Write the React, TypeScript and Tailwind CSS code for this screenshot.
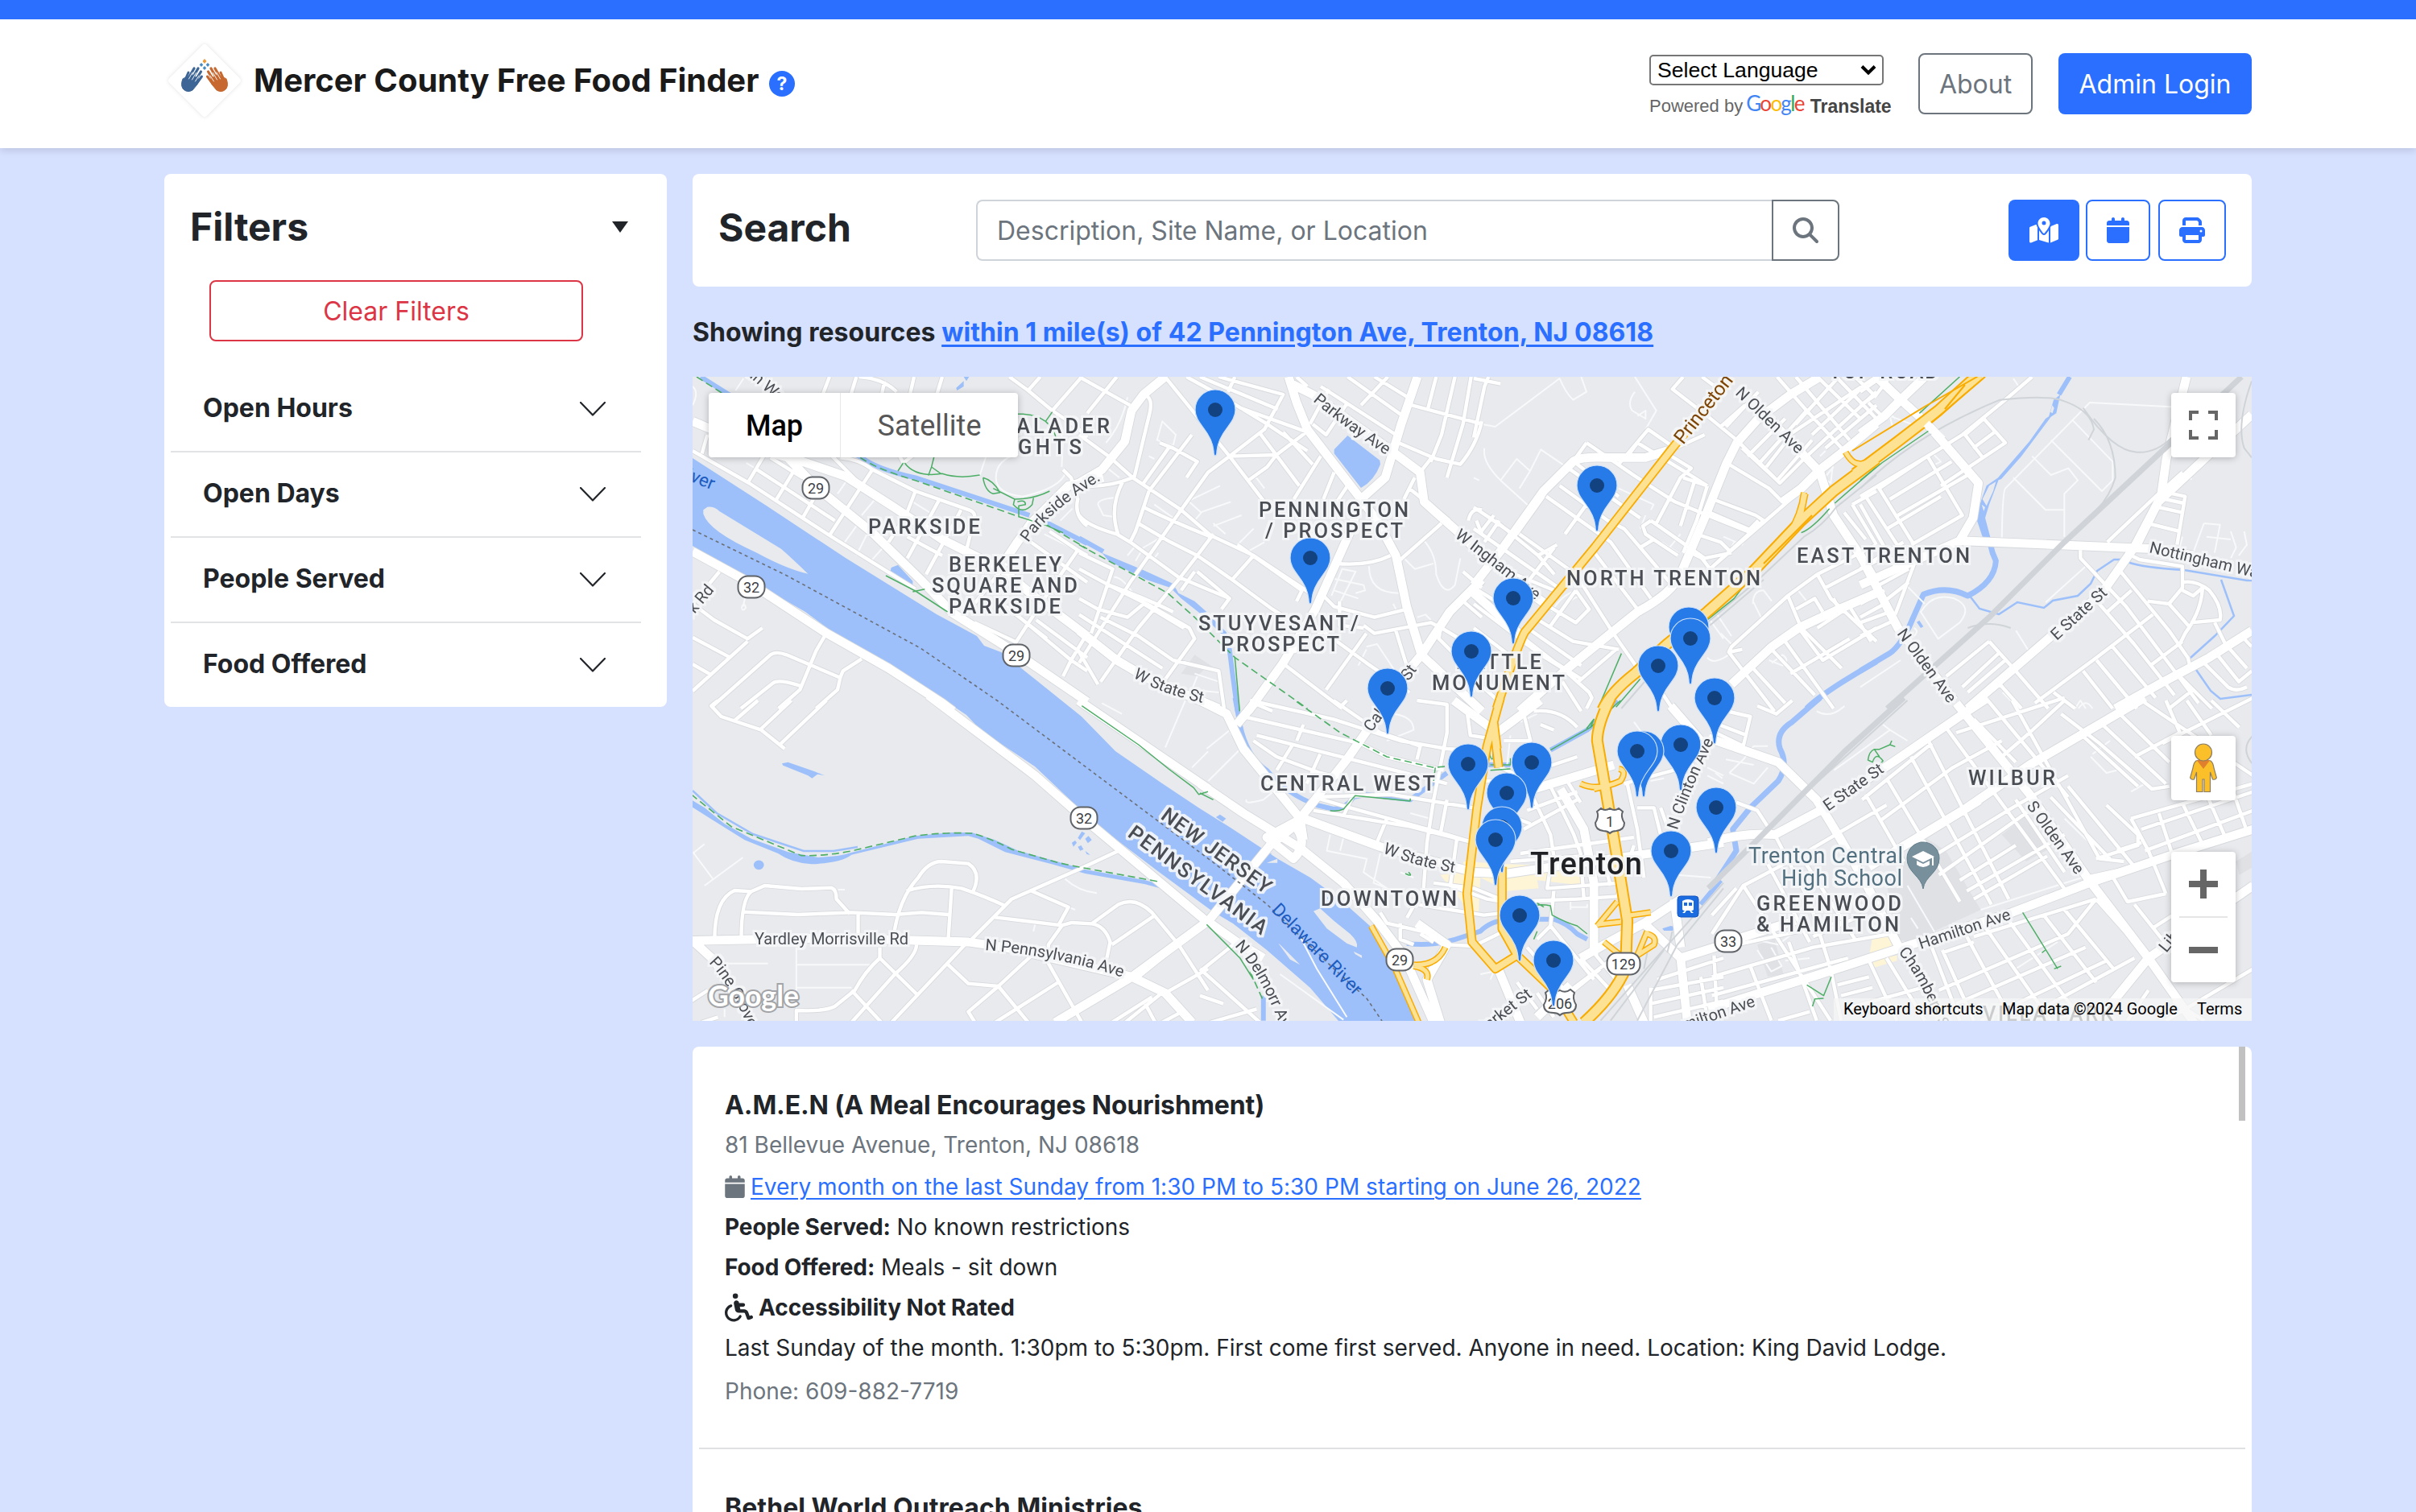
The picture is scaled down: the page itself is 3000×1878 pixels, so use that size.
import React from "react";
import {
  FaCalendar,
  FaMagnifyingGlass,
  FaMapLocationDot,
  FaPrint,
  FaWheelchair,
} from "react-icons/fa6";

/* ---------- Map geometry ---------- */

type Tile = {
  at: string;
  major?: string;
  street?: string;
  lane?: string;
  water?: string;
  stream?: string;
  creek?: string;
  trail?: string;
  dashed?: string;
  rail?: string;
  railWide?: string;
  highway?: string;
  avenue?: string;
  ramp?: string;
  land?: string;
  shade?: string;
  shop?: string;
};

const tiles: Tile[] = [
  {
    at: "translate(850 460) scale(.33333)",
    major:
      "M30 190L90 215L330 310L440 340L600 395L780 510L960 630L1180 740L1300 840L1500 990 M380 320L490 435L700 605L880 780L1000 905L1230 1050L1500 1235 M30 675L240 790L530 980L760 1110L960 1240L1000 1270 M1200 700L1240 640L1290 570L1430 430L1560 400",
    street:
      "M30 300L240 420L440 550L540 615L700 715L860 815 M65 310L85 240 M235 420L300 310 M340 485L410 370 M440 550L480 480 M540 615L660 430L700 370 M270 370L370 435L560 560 M320 325L440 400 M515 90L540 24 M620 90L640 24 M650 24Q740 30 790 80 M745 40L735 90 M840 90L855 24 M940 90L960 24 M1210 24L1280 75L1370 150L1460 210L1500 250 M1280 75L1325 24 M1370 150L1480 24 M580 325Q650 330 700 370L860 450L1060 520Q1085 530 1080 550L1050 670 M860 450L825 540L760 640 M950 480L830 700 M1030 520L965 640L900 760 M830 620L960 690 M550 320L650 420 M780 280L815 345L860 310 M1290 640L1500 790 M1360 600L1465 670L1500 690 M1465 670L1360 820L1230 1020 M1310 930L1500 1070 M1200 880L1440 1080L1500 1120 M1440 1080L1500 980 M1440 1080L1410 1140 M1080 870L1200 720 M1170 860L1350 1000 M1080 940L1230 1010 M130 750L30 870L110 930L235 1000L290 960 M30 995L170 1070 M30 1095L100 1135 M235 1010L30 1195 M525 985L490 1045L430 1190L350 1260 M100 1255L320 1060Q340 1045 380 1060L580 1145L590 1120L660 1075 M210 1260L330 1165Q350 1150 430 1175 M580 1145L570 1190L490 1260 M1410 370L1440 400L1465 480Q1450 540 1500 580",
    lane:
      "M570 460L605 410 M610 510L640 465 M660 540L710 480 M590 650L640 580 M640 690L690 590 M690 715L740 660 M710 485L800 540 M850 490L930 540 M1000 590L1050 600 M225 850L218 880 M212 885Q218 900 228 885Q222 860 212 885 M1100 390L1130 300L1250 310 M1160 400Q1160 460 1260 470Q1400 440 1420 380 M1160 400Q1160 330 1250 310 M1400 560L1445 515 M1340 610L1460 670 M190 75L220 30 M30 60Q55 80 30 130 M230 345L280 375 M1405 360L1410 260L1400 230",
    water:
      "M770 735L795 725L850 785L850 800L835 808L765 755Z M1012 65L1040 40L1040 60L1015 75Z M1040 24H1060L1050 40Z",
    stream: "M60 24L165 90L660 325Q720 370 860 400L1285 540 M1345 565L1500 645",
    trail:
      "M1240 163Q1280 160 1320 175L1345 190L1370 155 M1345 190Q1380 220 1385 260 M820 345Q860 400 960 385Q1020 405 1100 390 M815 345L795 375 M930 320L920 360L955 385 M920 360L908 392 M1112 400Q1120 450 1150 460L1175 455Q1150 410 1112 400 M1150 440L1230 480Q1300 480 1360 450 M1230 480L1225 500Q1260 540 1295 500L1300 475 M1240 490Q1270 480 1270 500L1245 505V545L1340 575L1410 605 M750 765L860 822L980 900 M850 825L895 815",
    dashed: "M45 24L140 85 M655 325Q720 370 860 410L1245 545 M1340 570L1500 665",
    land: "M70 520L85 509Q110 506 130 525L360 665Q400 700 460 758Q380 740 270 680Q90 600 70 535Z",
  },
  {
    at: "translate(1340 460) scale(.33333)",
    major:
      "M320 24L240 90L195 150L170 265L85 370L0 420 M780 24L810 120L850 220L1050 480L1110 560L1180 690L1220 880L1275 1060L1200 1150 M1260 24L1200 200L1140 400L1050 480L1010 600L880 890L760 1090L630 1270 M790 50L870 90L1150 290L1270 380L1285 490L1420 610L1500 690 M0 970L140 1080L260 1150L520 1260 M1500 780L1380 900L1275 1060L1500 1270",
    street:
      "M0 240L110 320L200 400L380 520L490 615L650 690L860 830 M30 160L140 24 M0 24L190 130 M205 400L260 170Q280 100 240 90 M320 24L430 160L560 320L690 490 M400 24L520 90L700 200L850 300 M450 24L740 145 M580 24L555 80 M520 24L760 90L690 220L560 320L480 380L380 520L190 790L0 1090 M600 140L850 230 M670 230L820 430 M860 220L735 315L700 360L630 410 M760 230L870 350 M560 320L740 315 M900 320L800 480 M950 380L910 480 M1000 430L960 490 M870 200L920 240L1000 120 M810 24L850 60 M930 70L860 200 M900 60L1180 240 M1000 24L1220 180 M1150 24L1050 130 M1100 24L1240 110 M1330 24L1300 140 M1400 24L1350 240L1310 340 M1460 24L1430 200L1370 400 M1240 130L1500 200 M1190 270L1330 330L1420 350Q1480 280 1500 190 M1270 380L1310 330 M0 540Q30 580 140 610L190 640L370 770L560 850L530 890 M165 410Q110 510 145 610 M0 430Q100 440 200 400 M240 510Q340 560 490 620 M220 570L340 640L440 690L570 780L720 890L830 960 M260 450L210 600L190 640 M590 650L830 820L810 860 M300 270L350 290L440 340L400 400 M240 420L340 280 M260 450L420 240 M650 690L570 780 M500 610L440 690L370 780L220 960L80 1160 M0 680L125 740L45 980 M0 740L110 800L270 880L410 960L430 1000L300 1180 M110 800Q250 850 350 900 M0 850L70 890L180 920L240 870L390 960 M80 920L220 990L350 1080L520 1120L540 1260 M0 910L310 1110 M0 1050L70 1170 M430 750L380 820 M440 750L560 850 M960 720Q1080 730 1160 690 M910 840L950 880L1100 920L1220 890 M1060 950L1100 980L1310 940L1350 960L1500 1050 M970 860V950L1060 960 M1180 970L1220 1100 M1070 980L920 1190 M850 930L1070 1090L1230 1200 M770 1100L980 1260 M1350 570L1180 720 M1230 440L1380 560 M1250 400L1210 480 M940 950L800 1050 M650 1240L720 1270 M1430 860L1500 920 M1500 1160L1340 1000L1345 970 M1450 560Q1460 510 1500 520 M1430 750L1500 810 M1480 560L1500 610",
    lane:
      "M310 190L360 240L350 280L290 260Z M260 320L280 330 M400 490L525 430 M410 490L455 530L430 560 M450 530L565 490 M500 580L605 540 M590 650L650 590 M620 680L690 640 M500 570L545 610 M70 500Q70 480 130 475 M70 500L90 540L125 545 M280 500L380 570 M210 710L240 660L310 620 M100 360L150 400 M630 410L660 400L690 440 M940 840L980 740L1030 750L970 870 M920 770L1060 800L1065 820L1030 830 M950 820L1040 850 M1080 730Q1080 830 1190 830 M1210 700L1250 740L1320 720 M1280 630Q1330 680 1330 760Q1360 850 1400 800L1420 700 M1170 870L1180 890 M1260 920L1290 910L1310 930 M1070 1030L1110 1020L1230 1200 M1070 1040L1040 1100 M130 770Q160 770 200 830L250 870 M100 270Q160 200 180 100 M430 1130L520 1160 M440 1140L420 1190L520 1200 M180 690L205 660 M280 700L295 680",
    water:
      "M950 295L1000 243L1120 335L1122 350Q1100 410 1050 438L950 310Z M85 680L240 745L350 795L370 830L430 860L475 900L450 905L380 850L340 810L250 780L110 710Z",
    stream: "M0 625L90 675 M490 930L540 980L560 1040L570 1120L590 1270",
    trail: "M580 1070L598 1270",
    dashed: "M0 650L330 830L430 920L580 1070L850 1260",
    shade: "M380 1130L430 1060L520 1120L470 1110L440 1140Z",
  },
  {
    at: "translate(1830 460) scale(.33333)",
    major:
      "M0 800L110 660L260 450L370 340Q400 320 500 325L640 325L720 300 M1290 24L1180 90L1060 180L980 270L940 350L860 550L770 760Q740 830 610 900L510 980L350 1110L170 1270 M1500 200L1380 300L1290 370L1220 440L1150 490 M1100 180L1290 380L1340 540L1440 690L1500 790 M0 830L180 990 M1500 830L1360 890L1210 960L1110 1030L960 1170 M170 800L280 880",
    street:
      "M55 24L40 60L0 250 M0 30L100 50 M420 270L580 380L640 420L750 490L870 540L1020 600L1060 560 M360 330L540 470 M360 370L620 550 M320 430L500 560L560 590L620 660L730 790 M270 470L440 590L510 640L660 850 M170 610L380 760L520 980L610 1110 M80 560L240 690L300 760 M0 510L60 550L160 620 M130 750L300 820 M0 590L330 820 M20 610L75 540 M40 640L95 560 M240 690L310 650 M200 790L300 660 M370 340L420 270 M540 350L650 220L750 290L860 240 M580 310L610 270L790 380L870 430 M340 610L420 500 M450 680L610 890 M260 470L160 610 M720 310L810 365L770 400L680 570 M780 400L870 430 M820 420L770 580 M870 430L830 560L780 680 M660 560L860 700L960 680 M660 560L630 580L640 610L760 690 M620 660L670 630 M890 480L1050 540L1080 560L880 740 M880 530L1020 590L1030 610L880 740 M830 610L920 640L960 680 M810 680L850 700L880 740L1180 480L1150 490L1100 440L1000 380L950 350 M780 24L740 70L870 170L980 260L1120 400L1140 420L1230 330L1500 80 M850 24L940 90 M1010 130L920 210 M1060 80L940 210 M1160 270L1090 360 M1000 290L1130 410L1260 260 M1130 24L1240 150L1380 300 M1200 24L1400 260 M1280 24L1440 180 M1350 24L1500 180 M1420 24L1500 100 M1150 100L1290 24 M1200 200L1360 24 M1260 240L1440 70 M1310 290L1500 130 M1160 250L1500 24 M1060 350L1240 150 M1020 320L1160 180 M1410 500L1500 450 M1410 500L1500 650 M1380 530L1460 630 M1280 760L1500 650 M1310 810L1500 710 M1280 760L1330 850L1500 1010 M1170 840L1280 760 M1360 890L1340 850 M1200 890L1270 850L1300 900 M1000 1040L950 1050L960 1030L1170 840L1220 960L1370 1110 M950 1050L1120 1270 M1040 1110L1160 1240 M1110 1040L1270 1210 M1160 1010L1340 1260 M1210 960L1300 1080L1500 960 M1280 960L1400 880L1480 1010 M1180 1130L1400 1000 M0 870L250 1060L330 1110 M0 810L130 890 M100 870L150 970L330 1110L430 1200L440 1220L420 1260 M180 1010L400 1150 M200 960L400 1100 M240 930L370 1010L540 1040 M380 1080L510 990 M280 880L380 940L430 890L380 820 M280 960L380 820 M0 960L130 1060 M390 1160L530 1040 M330 1160L400 1270 M0 1150L90 1230 M740 1260L700 1200",
    lane:
      "M0 195L80 210L320 30Q340 80 370 110L420 80L400 24 M600 24L680 150L640 220 M600 80Q570 120 590 150L640 180L640 150L610 170 M40 290Q30 340 100 410L210 510 M100 410L160 330L210 375L170 440 M210 375L250 295L360 370 M0 400L20 410 M290 900Q330 830 390 820 M310 920Q350 850 400 840 M540 440L670 500L660 520 M640 540L620 590 M880 930L930 1000 M900 900L960 990 M920 980L960 1020 M700 640L760 680L730 660L770 610 M900 740L860 710 M930 620L1000 650L1020 610 M970 640L960 660 M1040 870Q1040 820 1080 820L1110 860 M1070 920L1040 860 M870 1070Q890 1100 950 1060 M1110 1090L1150 1060Q1180 1080 1150 1100L1100 1080 M1290 320L1310 300 M1340 330L1330 420L1300 400 M1200 810L1240 860 M1340 360L1290 420",
    creek: "M1240 1260Q1300 1200 1500 1085",
    trail: "M550 1055L465 1255 M530 1255L620 1150 M870 930L970 850L1000 810L1070 745 M1220 605Q1260 590 1325 515 M1345 495L1500 360",
    rail: "M550 1260L680 1110 M870 940L1060 780L1230 620Q1300 580 1350 510L1500 390 M880 950L1080 780",
    highway: "M480 1265Q510 1200 600 1130L720 1020L870 900L1040 750L1220 560L1340 450L1500 330",
    ramp: "M1040 750Q1210 620 1230 455 M1215 560L1235 460 M1385 305Q1410 350 1440 350L1500 330",
    avenue: "M960 24L740 290L450 660L190 975Q165 1020 85 1260",
  },
  {
    at: "translate(2310 460) scale(.33333)",
    major:
      "M0 235L90 170L150 110L240 24 M60 24L140 100L240 190L310 270L440 420L420 550L370 635L0 800 M370 635L1090 665L1240 690 M1215 24L1140 330L1120 470L1020 660L900 830L700 1000L400 1260 M1458 165L1110 490L1030 650 M0 690L140 960L350 1230 M950 1260L1130 1160L1300 1070L1458 970",
    street:
      "M640 24L540 110L380 240L300 290L0 470 M0 130L60 90L110 24 M0 80L80 24 M30 120L90 180 M460 180L540 270L300 430 M460 180L390 240L460 330 M500 230L420 290 M250 320L380 540L190 650 M250 320L70 440L200 650 M110 480L340 340 M140 540L400 390L440 420 M20 470L170 700 M0 500L130 730 M100 590L300 470 M0 740L160 640 M0 920L90 870 M0 870L90 820 M0 800L130 740 M205 710L130 910 M70 800L180 740 M90 860L180 790 M0 940L110 900 M0 990L130 930 M920 640L1100 470L1200 380 M1140 455L1210 470L1180 650 M1110 510L1200 530 M1070 570L1190 600 M1135 480L1205 495 M820 670V700L990 880L1140 1080L1260 1240 M970 750L1060 860L1150 970L1220 1070L1230 1110 M1010 690L1040 705L1200 730V810L1150 870L1070 860 M1200 790Q1250 780 1300 820Q1350 880 1340 930L1230 940 M1200 820L1240 840L1275 810Q1270 900 1210 980L1190 1020 M1150 870L1230 960 M1320 940L1360 1020L1440 1110 M890 870L1020 1020L1170 1210 M1010 820L920 900 M1090 910L880 1070L650 1240 M940 1030L1100 1220 M880 1080L1030 1260 M830 1120L940 1260 M1200 1010L1080 1100 M1190 1140L1310 1260 M1240 1190L1150 1260 M480 1010L320 1140 M480 1010L570 1110L700 1260 M520 1050L380 1180 M540 1080L400 1200 M720 1200L800 1260 M430 1260L460 1220L520 1170L600 1260 M1270 1080L1370 1180Q1400 1200 1440 1180 M1330 1060L1410 1160L1458 1120 M1420 990L1458 1030",
    lane:
      "M1240 140L855 120L540 440Q530 450 527 630 M790 185L940 340V410L900 450L710 260 M640 320L710 390L775 365L810 410L760 460V620 M570 400L690 520H760 M840 730L690 865 M240 870L170 800 M240 880Q280 830 350 850Q420 880 370 940L290 1000L225 900Z M580 970L630 1050 M150 1080L0 1180 M1280 570L1340 575L1320 680 M1280 570L1240 680 M1290 620L1380 630 M1380 600L1400 660L1380 700 M1430 600L1440 650L1410 690 M1200 620L1190 660 M530 1200L570 1240 M800 1260L820 1230L840 1260 M130 180L100 150 M120 210L110 170L190 200 M270 310L300 340L280 350 M200 960Q220 970 200 990 M1210 400L1235 405 M570 30L590 60",
    water:
      "M445 500L470 430L520 395L480 500L465 550L485 625L455 620L435 560Z M500 415L630 265L690 180L720 160L600 320L525 405Z M720 110L745 90L730 160L700 180Z M210 938L220 932L235 955L225 960Z",
    land: "M455 480L480 430L505 415L495 450L470 505Z M708 155L715 130L722 140L716 160Z M452 500L465 510L460 525Z",
    stream: "M780 24L740 90",
    creek:
      "M485 650Q490 680 505 710Q500 790 400 840Q320 800 235 835L180 960Q140 1040 100 1060L0 1120",
    trail: "M0 410L80 345L255 225 M220 160L370 24",
    rail: "M0 440Q200 240 520 110Q700 90 760 115Q860 150 870 220Q860 240 850 260 M830 140Q940 300 1030 305Q1100 310 1160 250 M870 180Q950 260 950 400Q930 470 880 520 M1458 40Q1400 200 1430 290L1458 325 M400 960Q480 930 560 960",
    railWide: "M100 1260L480 920L760 640L1200 230L1420 24",
    highway: "M-20 385L140 265L290 150L430 24",
    ramp: "M300 150L450 24 M-20 345L10 350L60 330",
  },
  {
    at: "translate(850 870) scale(.41454 .33333)",
    major:
      "M730 -20L1050 280L1210 455L1570 830 M20 895L440 885L850 900L960 920L1340 1030L1440 1090L1520 1200 M20 890L90 970L200 1200 M1570 820L1340 1030L1110 1200 M1180 0L1570 330",
    street:
      "M100 0L80 20L110 60L230 110L300 180 M220 0L150 75 M320 0L230 105 M425 0L285 165 M90 890Q90 740 150 708L200 712L240 690L350 702L440 698Q455 705 455 740L495 795 M170 890Q170 740 200 712 M175 788L340 798L500 790L630 798L710 790L790 798 M520 795V890 M625 890Q640 740 700 660Q730 600 770 600L850 608Q890 640 865 710 M665 710Q740 680 830 700Q900 730 960 765 M800 700L790 890 M860 890L980 740L1180 630L1300 560 M930 808L1130 838L1160 828L1220 832Q1260 840 1275 900L1265 960 M1040 710L1150 770L1120 838 M1220 832L1300 760Q1350 730 1400 790L1480 910L1568 1080 M1280 910L1410 800 M1130 840L1090 910V980L1190 1200 M840 910L620 1200 M790 985L850 1055L940 1065L1040 950 M940 1065L850 1160L870 1200 M940 1065L1030 1200 M585 920V960L700 1100 M695 910Q695 950 630 1020L500 1200 M585 960Q540 1010 510 1080L450 1140Q420 1160 335 1155V1200 M500 1080L590 1200 M1120 1050L1000 1145L930 1200 M1400 1105L1280 1200 M1480 910L1350 1040 M1568 1000L1440 1090 M1430 1090L1320 1200 M1380 1130L1410 1200 M1490 1160L1430 1200 M100 1180L50 1200 M20 1120L70 1080",
    lane:
      "M25 570L60 535 M25 565L85 665 M60 690L175 585 M460 705H480 M1140 665Q1180 710 1235 718 M335 920V1200 M100 980H250 M335 985H560 M335 1070H500 M1150 770L1170 780 M1045 860L1050 835 M1250 10L1310 50 M1520 250L1568 190 M1500 0L1440 175 M120 1150V1180",
    water:
      "M292 235L310 230L390 265L420 280L398 275L382 290L370 280L295 242Z M207 613A15 17 0 0 1 238 613A15 17 0 0 1 207 613Z M1190 488L1200 495L1185 520L1178 512Z M1200 515L1210 505L1220 520L1208 532Z M1160 530L1170 522L1175 530L1165 545Z M1178 545L1188 540L1195 555L1185 560Z M1200 560L1215 575L1205 573Z M20 370L60 400L120 460L200 515L310 565L400 585Q470 580 490 570L600 535L690 505L800 492H860L930 520L1000 560L1130 605L1200 630L1380 670L1440 690L1568 820L1540 820L1440 705L1380 685L1200 645L1100 610L960 565L880 515L850 505L700 515L600 545L500 575Q470 605 380 610Q320 605 280 570L180 520L90 450L20 395Z",
    dashed: "M20 350L140 470L350 578Q430 580 510 558L690 505Q780 490 860 495Q900 505 980 555L1120 605L1200 625L1420 675",
    trail: "M1190 20L1360 165L1450 255L1525 325L1540 350L1568 340",
  },
  {
    at: "translate(1490 870) scale(.41454 .33333)",
    major:
      "M0 310L130 420L300 550L430 680L530 820L610 950L700 1200 M0 0L80 50L130 180L300 440 M170 0L110 90 M530 60L440 220L300 440L310 520 M310 440L540 545L760 620L820 640L920 645L1110 610L1350 570L1568 530 M760 0L890 120L1020 0 M20 830L210 540L290 460 M20 820L110 900L190 960 M1140 960L1240 890L1330 830L1440 740 M1180 950V680L1150 480L1080 330 M1000 330L1240 240 M890 990L960 1200 M650 830L740 910L680 1040L720 1200 M1410 20L1500 150 M1330 830L1440 960L1460 1200 M1440 960L1568 910 M1420 740L1440 920 M1280 1060L1330 1200 M1110 1060L1010 1180 M290 450L200 510L280 590Q330 530 280 460",
    street:
      "M130 60L480 160L560 210L730 260 M150 0L400 70L600 150L740 180L860 190 M310 90L290 150 M400 0L540 120L660 170L650 220 M440 0L420 25 M650 0L740 15V120L700 370L680 530L670 700L620 810 M160 150L230 210L360 270L430 290 M280 160L230 260 M360 200L320 310 M170 130L740 310 M340 360L450 400L740 500L820 530 M340 410L630 470L820 530 M460 350L430 430 M560 440L530 530 M350 360L570 350L820 400 M740 370L720 500 M770 510L750 690L860 740L910 750 M700 680L820 700L920 750L1130 740L1250 730L1300 540 M650 760L850 800L920 790 M820 300L890 300 M900 250L990 300 M980 410L1130 340 M970 480L1130 370 M930 430L990 460 M960 570L1300 510 M930 600L1140 580 M1050 620L1040 700L1260 680 M1060 710L1050 840L1010 890 M990 340L1050 500L1060 580 M1050 320L1120 500L1140 570L1150 740 M1100 300L1140 380 M1200 560L1230 690 M1310 400L1360 400L1390 550 M1280 310L1310 480L1330 660 M1270 310L1480 240 M1400 470L1380 400 M1260 230L1330 200 M540 790L560 830L700 870L740 910L820 915L910 860 M600 830V890L640 910 M660 870L700 900 M1050 840L1180 1040 M980 920L1100 1090 M1140 960L1230 1080 M1180 940L1260 1060 M1110 1080L1260 940 M1080 1120L1200 1000 M1010 1090L1060 1180 M950 1050L1010 1150 M1350 1080L1568 1030 M1350 1130L1568 1070 M1360 1180L1568 1120 M1370 1040L1568 960 M1540 950L1550 1200 M1350 1070V1200 M1500 1030L1520 1190 M1130 210L960 280 M1000 40Q1080 30 1130 100 M970 50L990 150L910 150 M800 40L810 130L860 140 M1020 90L1060 110 M0 1000L180 1200 M0 1010L100 910 M30 1200L170 1150 M0 1100L70 1130",
    lane:
      "M25 300L130 170L90 120 M20 180L100 100 M580 50Q640 60 640 110L560 150 M140 370Q130 390 190 370L250 310 M390 500L380 560L500 590L490 640L560 700 M430 510L420 560 M540 570L520 680L600 720 M600 640L640 660 M1110 770H1160V760 M1110 750V780 M1350 300L1390 290 M1520 250L1568 280 M1520 280L1568 310 M1430 650L1530 660 M840 1020L880 1010L870 1040 M630 420L690 440 M920 240L930 130 M300 880L350 1000L440 1180 M240 1020L430 1190 M960 80L1010 50 M1300 80L1330 130",
    water:
      "M1385 850L1410 840L1430 845L1415 858L1390 858Z M48 435L60 425L78 440L68 452Z M195 575L215 570L200 590Z",
    stream:
      "M105 -10L120 90Q140 210 200 260Q260 350 350 390L400 405Q440 400 460 360L500 350L630 370L740 270 M620 905Q700 920 790 880L840 860Q870 820 930 815H1060Q1100 830 1130 870L1160 890 M1050 185L1160 110Q1180 90 1250 0 M1560 670L1500 760 M190 1100V1193 M830 240H930",
    land:
      "M200 605L232 590V605Z M340 785L360 775L400 820L450 870Q475 900 470 920L440 905L380 850Z M235 905L240 910L300 985L270 965Z M460 935L485 950V960L465 945Z",
    trail:
      "M20 835L120 960L160 1040 M630 375L465 355L430 405Q410 415 390 410 M630 375V365 M700 300L705 250 M0 345L40 370 M625 640Q640 660 615 645 M870 130Q860 200 875 220 M878 130V220 M870 240H930V215 M870 260L930 255 M1050 185L1170 100L1180 70L1158 105 M1170 100L1260 0 M930 800Q990 750 1050 765L1055 800Q1100 830 1130 840Q1150 860 1160 870 M1010 755L1030 770 M1010 860L1000 890",
    dashed: "M290 5L420 120L560 210L700 250L740 245 M150 1010L190 1120",
    rail: "M1310 1193L1430 910L1568 700 M1200 1193L1380 940L1568 680 M1415 860L1400 940 M1340 940L1330 1000 M1390 930L1230 1193",
    highway: "M1230 -10Q1190 90 1190 150L1215 330L1250 590L1280 820L1275 1000Q1240 1100 1150 1200",
    avenue:
      "M900 -10L880 80L860 170L830 400L800 720L815 900L885 1000L950 950 M880 100L895 250 M905 620V850L950 950L1060 1080L1120 1200 M880 80L890 180",
    ramp: "M513 840L585 1000L655 1200 M1140 310Q1190 340 1260 300Q1280 260 1255 255 M1180 330L1215 320 M1190 840L1250 750 M1190 835L1260 825 M1210 900L1260 950 M1350 790L1290 800 M1340 860L1310 950L1360 910Q1370 880 1340 870 M640 985Q710 990 735 920 M640 990Q690 1000 680 1040",
    shop: "M790 600L920 610L1150 620V690L1010 670L1015 700L920 710L840 660L835 790H810L720 650L780 640Z",
  },
  {
    at: "translate(2130 870) scale(.43367 .33333)",
    major:
      "M-20 140L180 230L290 370L360 520L430 680L530 930 M-20 530Q80 490 170 500L300 410L520 220L710 50L780 -10 M690 10L900 350L1070 670L1240 960L1370 1200 M440 620L720 400L900 240L1230 -10 M-20 1150L300 1020L560 910L850 790L1070 680L1320 570L1540 480 M1540 690L1240 960L1090 1200 M60 890L230 820",
    street:
      "M0 30L100 60L80 170L0 120 M10 90L90 130 M60 380L120 410L160 490 M120 20L175 50L220 0 M170 500L270 750L330 1000L360 1193 M-10 870L80 690L240 580L410 450L490 390 M80 690L330 1193 M150 610L270 900 M240 570L400 890 M330 470L440 700 M-10 800L60 700 M430 350L540 600 M490 290L700 750 M560 210L790 760 M610 150L840 740 M660 100L1010 720 M780 0L1010 360 M850 0L1100 590L1170 600 M740 70L860 230 M860 370L1000 640 M960 360L1130 590 M1010 320L1200 620 M420 370L620 160 M470 450L680 250L820 150 M560 540L760 380 M600 600L850 400L1010 280 M640 650L900 410 M700 670L860 540 M720 710L920 560L1000 500 M740 740L950 580 M690 120L1000 -10 M820 210L900 120L1000 0 M1090 590L1210 540V500L1120 390 M990 50L1100 160L1250 330L1300 320 M1050 130L1210 320 M1100 80L1290 310 M1150 40L1300 230 M1190 440L1540 310 M1220 480L1540 340 M1230 560L1540 410 M1190 440L1240 560L1290 720 M1270 420L1310 580 M1340 390L1400 550 M1410 360L1460 510 M1480 330L1520 480 M1220 530L1150 560 M1060 660L1200 620 M1130 640L1180 750L1290 720 M1090 740L940 800L740 880 M1290 0L1330 120L1200 210 M1350 0L1420 130 M1420 0L1500 100 M1220 0L1540 280 M1280 160L1540 -10 M620 920L700 1193 M-10 930L240 860L380 820 M-10 1030L280 920L500 870 M-10 1100L130 1050L380 960 M100 990L160 1193 M210 900L290 1193 M420 800L280 880 M440 970L520 1193 M490 960L600 1193 M650 930L740 1193 M720 880L850 1193 M770 840L960 1193 M840 820L1050 1193 M940 800L1090 1050 M1000 780L1140 1000 M1090 740L1220 930 M650 940L740 900 M640 1080L1010 870L1090 740 M690 1130L1060 920 M760 1193L1120 970 M870 1193L1200 960 M350 1060L440 1030 M360 1100L450 1070 M370 1150L620 1060 M180 1193L270 1160 M1290 1193L1540 1000 M1310 1120L1400 1193 M1240 1080L1180 1193 M1200 760L1310 940 M1250 850L1310 800",
    lane:
      "M340 260L500 110L480 90 M500 110L550 150 M290 40Q330 70 370 20 M40 270L80 220L110 170L150 170 M40 270L110 310L150 250 M30 220L110 240 M0 270L20 290 M1080 200L1130 150 M1075 210L1120 270L1150 260 M1190 340L1230 310 M1000 440L1110 580 M110 890L180 910L230 860 M120 930L160 1010L190 990L160 920 M550 690L640 890 M560 810L580 850 M760 780L1050 660 M860 1000L980 900 M200 970L270 960 M1040 30Q1060 -10 1080 30",
    creek: "M300 -10L220 80Q170 120 185 180Q210 240 180 300L100 400L50 480L60 560L0 680",
    rail: "M550 0L380 200L160 460L-20 700 M1540 130Q1500 180 1540 240",
    railWide: "M540 -10L370 190L120 520L-20 700",
    trail:
      "M505 150L500 165L515 172 M500 165L470 182H455Q440 190 437 222L450 230Q460 190 480 225L470 240 M455 182L470 210 M880 790L980 1000 M945 930L935 940 M970 1000L990 990 M262 1060L310 1100L332 1030 M310 1110L285 1112L278 1140",
    shade:
      "M490 680L600 510L660 560L760 780L560 900L520 890Z M820 500L890 430L960 550L890 600Z M120 910L170 890L195 1020L150 1030Z M1490 600L1540 560V620L1500 650Z",
    shop: "M450 880L500 870L515 920L440 955Z M448 965L520 950V970L455 995Z",
  },
];

function Layer({
  k,
  color,
  width,
  fill,
  dash,
}: {
  k: keyof Tile;
  color?: string;
  width?: number;
  fill?: string;
  dash?: string;
}) {
  return (
    <g
      fill={fill ?? "none"}
      stroke={color ?? "none"}
      strokeWidth={width}
      strokeLinejoin="round"
      strokeDasharray={dash}
    >
      {tiles.map((t) =>
        t[k] ? (
          <path key={t.at} d={t[k]} transform={t.at} vectorEffect="non-scaling-stroke" />
        ) : null,
      )}
    </g>
  );
}

const hoods: [string, number, number, number][] = [
  ["CADWALADER", 1173, 538, 205],
  ["HEIGHTS", 1211, 564, 132],
  ["PARKSIDE", 1078, 663, 139],
  ["BERKELEY", 1178, 710, 140],
  ["SQUARE AND", 1157, 736, 181],
  ["PARKSIDE", 1178, 762, 139],
  ["PENNINGTON", 1563, 642, 186],
  ["/ PROSPECT", 1571, 668, 171],
  ["STUYVESANT/", 1488, 783, 199],
  ["PROSPECT", 1516, 809, 147],
  ["NORTH TRENTON", 1945, 727, 241],
  ["BATTLE", 1808, 831, 106],
  ["MONUMENT", 1778, 857, 165],
  ["EAST TRENTON", 2231, 699, 215],
  ["TOP ROAD", 2271, 470, 136],
  ["CENTRAL WEST", 1565, 982, 217],
  ["DOWNTOWN", 1640, 1125, 169],
  ["WILBUR", 2444, 975, 108],
  ["GREENWOOD", 2181, 1131, 180],
  ["& HAMILTON", 2181, 1157, 177],
  ["VILLA PARK", 2462, 1268, 162],
];

const streets: [string, string][] = [
  ["Parkside Ave.", "M1277 674Q1306 630 1378 590"],
  ["Parkway Ave", "M1630 498Q1680 540 1740 577"],
  ["W Ingham Ave", "M1806 667Q1850 700 1930 765"],
  ["N Olden Ave", "M2154 489L2242 574"],
  ["N Olden Ave", "M2355 787L2431 890"],
  ["S Olden Ave", "M2516 1001L2590 1104"],
  ["E State St", "M2554 796L2640 717"],
  ["E State St", "M2270 1008L2362 943"],
  ["Nottingham Way", "M2668 686L2840 727"],
  ["W State St", "M1407 841Q1445 865 1515 877"],
  ["W State St", "M1717 1059Q1760 1078 1832 1088"],
  ["Yardley Morrisville Rd", "M937 1173L1160 1173"],
  ["N Pennsylvania Ave", "M1223 1180Q1325 1188 1420 1223"],
  ["Pine Grove Ave", "M880 1196Q915 1230 950 1330"],
  ["N Delmorr Ave", "M1533 1175Q1575 1220 1605 1320"],
  ["N Clinton Ave", "M2083 1031Q2096 985 2138 900"],
  ["Calhoun St", "M1703 910L1774 812"],
  ["Market St", "M1836 1290L1920 1224"],
  ["Hamilton Ave", "M2385 1179L2520 1134"],
  ["Hamilton Ave", "M2068 1288L2205 1241"],
  ["Chambers St", "M2357 1183Q2390 1220 2418 1306"],
  ["Liberty St", "M2690 1184L2760 1098"],
  ["Sullivan Way", "M890 433L1000 529"],
  ["Park Rd", "M843 786L905 712"],
];

const pins: [number, number][] = [
  [1509, 509], [1983, 603], [1627, 693], [1879, 743], [2097, 779], [2099, 793],
  [1827, 809], [2059, 827], [1723, 855], [2129, 867], [2087, 925], [2041, 933],
  [2033, 933], [1902, 947], [1823, 949], [1871, 985], [2131, 1003], [1865, 1027],
  [1857, 1043], [2075, 1057], [1887, 1137], [1929, 1193],
];

const shields: [string, number, number, number][] = [
  ["29", 1013, 606, 33],
  ["32", 933, 729, 33],
  ["29", 1262, 814, 33],
  ["32", 1346, 1016, 33],
  ["29", 1738, 1192, 33],
  ["129", 2016, 1197, 41],
  ["33", 2146, 1169, 33],
];

const river =
  "M860 569L950 627L1050 693L1163 763L1213 790L1222 802L1243 810L1287 845L1343 890L1385 933L1443 973L1488 1003L1531 1030L1569 1055L1587 1067L1627 1090L1664 1117L1701 1150L1726 1190L1747 1230L1764 1268H1662L1627 1227L1573 1180L1531 1147L1507 1133L1439 1083L1360 1023L1285 952L1219 908L1200 888L1173 870L1083 822L1050 797L1000 760L927 718L860 678Z";

function MapCanvas() {
  return (
    <svg
      viewBox="860 468 1936 800"
      className="block h-[800px] w-[1936px]"
      fontFamily="Roboto, sans-serif"
    >
      <defs>
        <filter id="halo" filterUnits="userSpaceOnUse" x="860" y="468" width="1936" height="800" colorInterpolationFilters="sRGB">
          <feMorphology in="SourceAlpha" operator="dilate" radius="3" result="fat" />
          <feGaussianBlur in="fat" stdDeviation=".7" result="soft" />
          <feFlood floodColor="#f5f6f8" floodOpacity=".92" />
          <feComposite in2="soft" operator="in" />
          <feMerge>
            <feMergeNode />
            <feMergeNode in="SourceGraphic" />
          </feMerge>
        </filter>
      </defs>
      <rect x="860" y="468" width="1936" height="800" fill="#e8eaed" />
      <Layer k="shade" fill="#e0e1e5" />
      <Layer k="shop" fill="#fef4d6" />
      <path d={river} fill="#9dc0fb" />
      <Layer k="water" fill="#9dc0fb" />
      <Layer k="creek" color="#9dc0fb" width={7} />
      <Layer k="stream" color="#9dc0fb" width={6} />
      <g fill="none" stroke="#9dc0fb" strokeWidth="2.500">
        <path d="M2445 739L2458 756L2482 763L2505 748L2538 755L2549 746L2580 740L2596 725L2604 709L2625 695H2640 M2642 698Q2660 705 2712 708L2790 721H2796 M2758 720L2774 765L2750 790L2720 817 M2725 829L2745 858L2757 868L2796 863 M860 982L890 1010L935 1036L998 1057H1035L1065 1052" />
      </g>
      <Layer k="land" fill="#e8eaed" />
      <Layer k="lane" color="#f8f9fa" width={2} />
      <Layer k="street" color="#d8dade" width={6.2} />
      <Layer k="major" color="#d5d8dc" width={12.5} />
      <Layer k="street" color="#ffffff" width={4.4} />
      <Layer k="major" color="#ffffff" width={10.8} />
      <Layer k="rail" color="#d0d4d8" width={2} />
      <Layer k="railWide" color="#d0d4d8" width={7} />
      <Layer k="trail" color="#4dae66" width={1.5} />
      <Layer k="dashed" color="#4dae66" width={1.6} dash="9 5" />
      <Layer k="ramp" color="#f9ab00" width={8} />
      <Layer k="highway" color="#f9ab00" width={15} />
      <Layer k="avenue" color="#f9ab00" width={11.5} />
      <Layer k="ramp" color="#fde293" width={5} />
      <Layer k="highway" color="#fde293" width={11} />
      <Layer k="avenue" color="#fde293" width={8} />
      <path d="M2300 560L2390 505L2455 468 M2395 528L2465 468 M2415 508L2440 478 M2190 700L2250 640" stroke="#f9ab00" strokeWidth="2" fill="none" />
      <path d="M2392 526L2412 546" stroke="#fff" strokeWidth="10" />
      <path
        d="M860 658L977 715L1143 805L1238 870L1505 1070L1573 1123L1656 1203L1697 1240L1716 1268"
        fill="none"
        stroke="#6b6f76"
        strokeWidth="1.6"
        strokeDasharray="4 4"
      />

      <g filter="url(#halo)" fill="#4a4e54">
        <g fontSize="20">
          {streets.map(([label, d], i) => (
            <g key={d}>
              <path id={`street-${i}`} d={d} fill="none" />
              <text>
                <textPath href={`#street-${i}`}>{label}</textPath>
              </text>
            </g>
          ))}
        </g>
        <g fontSize="25.5" fontWeight="500">
          {hoods.map(([label, x, y, len]) => (
            <text key={`${x}-${y}`} x={x} y={y} textLength={len}>
              {label}
            </text>
          ))}
          <text transform="translate(1440 1016) rotate(36)" textLength="162">
            NEW JERSEY
          </text>
          <text transform="translate(1399 1038) rotate(36.5)" textLength="208">
            PENNSYLVANIA
          </text>
        </g>
        <text transform="translate(2090 553) rotate(-52)" fontSize="24" textLength="102" fill="#7c4303">
          Princeton
        </text>
        <g fontSize="27" fill="#537080">
          <text x="2171" y="1072" textLength="192">Trenton Central</text>
          <text x="2212" y="1100" textLength="150">High School</text>
        </g>
        <text x="1900" y="1086" fontSize="38" fontWeight="500" textLength="139" fill="#202124">
          Trenton
        </text>
      </g>
      <g fill="#1c5bbf" fontSize="22.5">
        <text transform="translate(1578 1131) rotate(45.500)" textLength="149">Delaware River</text>
        <text transform="translate(838 590) rotate(22)">River</text>
      </g>

      <g fill="#fff" stroke="#5f6368" strokeWidth="2" fontSize="18" textAnchor="middle">
        {shields.map(([n, x, y, w]) => (
          <g key={`${x}-${y}`}>
            <rect x={x - w / 2} y={y - 13.5} width={w} height="27" rx="12" />
            <text x={x} y={y + 6.5} fill="#3c4043" stroke="none">{n}</text>
          </g>
        ))}
        <path d="M1983 1008L1988 1004Q1993 1008 1999 1004Q2005 1008 2010 1004L2015 1008Q2012 1014 2017 1022Q2017 1031 2007 1032Q2002 1032 1999 1035Q1996 1032 1991 1032Q1981 1031 1981 1022Q1986 1014 1983 1008Z" />
        <text x="1999" y="1027" fill="#3c4043" stroke="none">1</text>
        <path d="M1919 1233L1924 1229Q1930 1234 1937 1230Q1944 1234 1950 1229L1955 1233Q1952 1240 1957 1248Q1957 1258 1945 1258Q1940 1258 1937 1261Q1934 1258 1929 1258Q1917 1258 1917 1248Q1922 1240 1919 1233Z" />
        <text x="1937" y="1253" fill="#3c4043" stroke="none">206</text>
      </g>

      <g>
        <rect x="2083" y="1113" width="26" height="26" rx="4" fill="#1a6be0" stroke="#1656c2" strokeWidth="1" />
        <path d="M2089 1119Q2096 1115 2103 1119V1129Q2103 1131 2100 1131L2103 1134H2100L2098 1131H2094L2092 1134H2089L2092 1131Q2089 1131 2089 1129Z" fill="#fff" />
        <path d="M2091 1121H2095V1125H2091Z M2097 1121H2101V1125H2097Z" fill="#1a6be0" />
      </g>
      <g>
        <path d="M2388 1104C2386 1088 2368 1084 2368 1066A20 20 0 0 1 2408 1066C2408 1084 2390 1088 2388 1104Z" fill="#78909c" stroke="#607d8b" />
        <path d="M2388 1057L2402 1064L2388 1071L2374 1064Z M2380 1069L2388 1073L2396 1069V1074Q2388 1080 2380 1074Z M2399 1065H2401V1075H2399Z" fill="#fff" />
      </g>

      {pins.map(([x, y]) => (
        <g key={`${x}-${y}`} transform={`translate(${x} ${y})`}>
          <path
            d="M0 57C-1.500 57-2 55-2 51C-3 40-8 31-15 22C-21 14-25 8-25 0A25 25 0 0 1 25 0C25 8 21 14 15 22C8 31 3 40 2 51C2 55 1.500 57 0 57Z"
            fill="#267be9"
            stroke="#cfe0f8"
            strokeWidth="1.200"
          />
          <circle r="9" fill="#12427f" />
        </g>
      ))}

      <text
        x="879"
        y="1250"
        fontFamily="Lato, sans-serif"
        fontWeight="700"
        fontSize="36"
        textLength="113"
        fill="#ffffff"
        stroke="#a2a4a7"
        strokeWidth="4"
        paintOrder="stroke"
        lengthAdjust="spacingAndGlyphs"
      >
        Google
      </text>
    </svg>
  );
}

function MapPanel() {
  return (
    <div className="relative mt-8 h-[800px] w-[1936px] overflow-hidden font-[Roboto,sans-serif]">
      <MapCanvas />
      <div className="absolute left-5 top-5 flex h-20 w-96 rounded bg-white text-[36px] leading-none shadow-[0_1px_8px_rgba(0,0,0,0.25)]">
        <div className="flex w-[163px] items-center justify-center pt-0.5 font-medium text-black">Map</div>
        <div className="flex grow items-center justify-center border-l border-[#e8e8e8] pt-0.5 text-[#565656]">
          Satellite
        </div>
      </div>
      <div className="absolute right-5 top-5 flex size-20 items-center justify-center rounded bg-white shadow-[0_1px_8px_rgba(0,0,0,0.25)]">
        <svg viewBox="0 0 18 18" className="size-9" fill="#666">
          <path d="M0 0v6h2V2h4V0zM12 0v2h4v4h2V0zM16 16h-4v2h6v-6h-2zM2 12H0v6h6v-2H2z" />
        </svg>
      </div>
      <div className="absolute right-5 top-[446px] flex size-20 items-center justify-center rounded bg-white shadow-[0_1px_8px_rgba(0,0,0,0.25)]">
        <svg viewBox="0 0 34 62" className="h-[62px] w-[34px]" fill="#fbbf2a" stroke="#8a7d63" strokeWidth="1.200">
          <path d="M8 22Q17 19 26 22Q29 24 30 31L33.400 43Q32 46 28.500 45L25.500 36V60.500H18V45H16V60.500H8.500V36L5.500 45Q2 46 .6 43L4 31Q5 24 8 22Z" />
          <path d="M9 21.500Q17 19 25 21.500L17 32Z" fill="#e07f2e" stroke="none" />
          <circle cx="17" cy="11.500" r="10.500" />
        </svg>
      </div>
      <div className="absolute right-5 top-[590px] flex h-[162px] w-20 flex-col items-center rounded bg-white shadow-[0_1px_8px_rgba(0,0,0,0.25)]">
        <div className="flex h-20 items-center">
          <svg viewBox="0 0 36 36" className="size-9" fill="#666">
            <path d="M14 0h8v14h14v8H22v14h-8V22H0v-8h14z" />
          </svg>
        </div>
        <div className="h-0.5 w-15 bg-[#e6e6e6]" />
        <div className="flex h-20 items-center">
          <div className="h-2 w-9 bg-[#666]" />
        </div>
      </div>
      <div className="absolute bottom-0 right-0 flex h-7 w-[519px] items-center whitespace-nowrap bg-[#f5f5f5]/75 pb-0.5 pl-3 text-[20px] leading-none text-black">
        <span className="w-[197px]">Keyboard shortcuts</span>
        <span className="w-[242px]">Map data ©2024 Google</span>
        <span>Terms</span>
      </div>
    </div>
  );
}

/* ---------- Page chrome ---------- */

function Hand({ color, flip }: { color: string; flip?: boolean }) {
  return (
    <g
      transform={flip ? "translate(60 0) scale(-1 1)" : undefined}
      fill={color}
      stroke={color}
      strokeLinecap="round"
    >
      <path d="M3 19Q0 26 3 31Q8 37 15 33L20 27L24 20L15 14Z" strokeWidth="1" />
      <path d="M6 20L10 11" strokeWidth="3" />
      <path d="M10 18L17 6" strokeWidth="3.200" />
      <path d="M14 20L22 6" strokeWidth="3.200" />
      <path d="M18 22L25.500 10" strokeWidth="3.200" />
      <path d="M20 25L26.500 16" strokeWidth="3" />
      <path d="M10.500 19L15 11M14.500 20L19.500 11.500M18.500 22L23 15" stroke="#fff" strokeWidth=".9" />
    </g>
  );
}

function Logo() {
  return (
    <div className="relative flex size-[100px] shrink-0 items-center justify-center">
      <div className="absolute size-[66px] rotate-45 rounded-sm bg-white shadow-[0_0_5px_rgba(0,0,0,0.12)]" />
      <svg viewBox="0 0 60 44" className="relative -top-[5px] h-11 w-15">
        <g transform="translate(0 6)">
          <Hand color="#3d6595" />
          <Hand color="#c66830" flip />
        </g>
        <path d="M30 0L32.500 3L30 6L27.500 3Z" fill="#eb9b3b" />
        <path d="M26 5L28.300 7.500L26 10L23.700 7.500Z M34 5L36.300 7.500L34 10L31.700 7.500Z M30 9L32.300 11.500L30 14L27.700 11.500Z" fill="#4a8cc0" />
      </svg>
    </div>
  );
}

function Header() {
  return (
    <header className="relative z-10 h-[184px] border-t-[24px] border-[#2a6fff] bg-white shadow-[0_2px_10px_rgba(0,0,0,0.14)]">
      <div className="mx-auto flex h-full w-[2592px] items-start">
        <div className="mt-[26px]">
          <Logo />
        </div>
        <h1 className="ml-[11px] mt-[52px] w-[627px] whitespace-nowrap text-[40px] font-bold leading-[48px] tracking-[-0.030px] text-[#1a1a1a]">
          Mercer County Free Food Finder
        </h1>
        <div className="ml-[13px] mt-16 flex size-8 items-center justify-center rounded-full bg-[#2a6fff] text-[23px] font-bold text-white">
          ?
        </div>
        <div className="ml-auto mt-11 w-[334px] font-['Liberation_Sans',sans-serif]">
          <div className="flex h-[38px] w-[291px] items-center justify-between rounded-[5px] border-2 border-[#767676] pl-2 pr-[7px] text-[26.600px] leading-none text-black">
            <span>Select Language</span>
            <svg viewBox="0 0 20 14" className="h-3.5 w-5" fill="none" stroke="#000" strokeWidth="4">
              <path d="M2 2.500L10 10.500L18 2.500" />
            </svg>
          </div>
          <div className="mt-2 flex h-9 items-center whitespace-nowrap text-[22px] leading-none text-[#666]">
            <span>Powered by</span>
            <span className="relative -top-1 ml-1 font-['Lato',sans-serif] text-[26px] leading-none tracking-[-1.700px]">
              <span className="text-[#4285f4]">G</span>
              <span className="text-[#ea4335]">o</span>
              <span className="text-[#fbbc05]">o</span>
              <span className="text-[#4285f4]">g</span>
              <span className="text-[#34a853]">l</span>
              <span className="text-[#ea4335]">e</span>
            </span>
            <span className="ml-2 text-[23px] font-bold text-[#444]">Translate</span>
          </div>
        </div>
        <div className="mt-[42px] flex h-[76px] w-[142px] items-center justify-center rounded-lg border-2 border-[#6c757d] pt-0.5 text-[32px] text-[#6c757d]">
          About
        </div>
        <div className="ml-8 mt-[42px] flex h-[76px] w-60 items-center justify-center rounded-lg bg-[#2a6fff] pt-0.5 text-[32px] text-white">
          Admin Login
        </div>
      </div>
    </header>
  );
}

function Filters() {
  const sections = ["Open Hours", "Open Days", "People Served", "Food Offered"];
  return (
    <aside className="h-[662px] w-[624px] shrink-0 rounded-lg bg-white">
      <div className="flex h-[132px] items-center justify-between pl-8 pr-12">
        <h2 className="text-[48px] font-bold leading-none">Filters</h2>
        <svg viewBox="0 0 20 14" className="h-3.5 w-5" fill="#212529">
          <path d="M0 0H20L10 14Z" />
        </svg>
      </div>
      <button className="ml-14 flex h-[76px] w-[464px] items-center justify-center rounded-lg border-2 border-[#dc3545] pt-0.5 text-[32px] text-[#dc3545]">
        Clear Filters
      </button>
      <div className="ml-2 mt-8 w-[584px]">
        {sections.map((s) => (
          <div
            key={s}
            className="flex h-[106px] items-center justify-between border-b-2 border-[#e2e3e4] pl-10 pr-11 last:h-[104px] last:border-0"
          >
            <span className="pb-0.5 text-[32px] font-bold leading-none">{s}</span>
            <svg viewBox="0 0 32 18" className="h-[18px] w-8" fill="none" stroke="#212529" strokeWidth="2.200" strokeLinecap="round" strokeLinejoin="round">
              <path d="M1 1L16 16.500L31 1" />
            </svg>
          </div>
        ))}
      </div>
    </aside>
  );
}

function SearchBar() {
  return (
    <section className="flex h-[140px] items-center rounded-lg bg-white pl-8 pr-8">
      <h2 className="w-80 text-[48px] font-bold leading-none">
        <span className="relative -top-[3px]">Search</span>
      </h2>
      <div className="flex h-[76px] w-[988px] items-center rounded-l-lg border-2 border-r-0 border-[#ced4da] pl-6 pt-0.5 text-[32px] text-[#6c757d]">
        Description, Site Name, or Location
      </div>
      <div className="flex h-[76px] w-[84px] items-center justify-center rounded-r-lg border-2 border-[#6c757d] text-[#6c757d]">
        <FaMagnifyingGlass className="size-8" />
      </div>
      <div className="ml-auto flex h-[76px] text-[#2a6fff]">
        <div className="flex w-[88px] items-center justify-center rounded-lg bg-[#2a6fff] text-white">
          <FaMapLocationDot className="h-8 w-9" />
        </div>
        <div className="ml-2 flex w-20 items-center justify-center rounded-lg border-2 border-[#2a6fff]">
          <FaCalendar className="h-8 w-7" />
        </div>
        <div className="ml-2.5 flex w-[84px] items-center justify-center rounded-lg border-2 border-[#2a6fff]">
          <FaPrint className="size-8" />
        </div>
      </div>
    </section>
  );
}

function Results() {
  return (
    <section className="relative mt-8 h-[600px] rounded-t-lg bg-white px-2">
      <div className="absolute right-2 top-0 h-23 w-2 bg-[#c1c1c1]" />
      <article className="h-[500px] border-b-2 border-[#dfe1e3] px-8 pt-[49px] text-[28px] leading-[50px]">
        <h3 className="text-[32px] font-bold leading-[48px] tracking-[-0.1px]">
          A.M.E.N (A Meal Encourages Nourishment)
        </h3>
        <p className="text-[#6c757d]">81 Bellevue Avenue, Trenton, NJ 08618</p>
        <p className="mt-0.5 flex items-center">
          <FaCalendar className="mr-[7px] h-7 w-[25px] text-[#6c757d]" />
          <span className="tracking-[0.030px] text-[#2a6fff] underline decoration-2 underline-offset-4">
            Every month on the last Sunday from 1:30 PM to 5:30 PM starting on June 26, 2022
          </span>
        </p>
        <p>
          <b className="tracking-[-0.1px]">People Served:</b> No known restrictions
        </p>
        <p>
          <b className="tracking-[-0.1px]">Food Offered:</b> Meals - sit down
        </p>
        <p className="flex items-center">
          <FaWheelchair className="mr-[7px] h-9 w-[35px]" />
          <b>Accessibility Not Rated</b>
        </p>
        <p>
          Last Sunday of the month. 1:30pm to 5:30pm. First come first served. Anyone in need. Location: King David Lodge.
        </p>
        <p className="mt-1 text-[#6c757d]">Phone: 609-882-7719</p>
      </article>
      <h3 className="px-8 pt-[49px] text-[32px] font-bold leading-[48px] tracking-[0.050px]">
        Bethel World Outreach Ministries
      </h3>
    </section>
  );
}

export default function App() {
  return (
    <div className="h-[1878px] w-[3000px] overflow-hidden bg-[#d6e0ff] font-[Inter,sans-serif] text-[#212529]">
      <Header />
      <main className="mx-auto flex w-[2592px] items-start gap-8 pt-8">
        <Filters />
        <div className="w-[1936px]">
          <SearchBar />
          <p className="mt-8 whitespace-nowrap pt-px text-[32px] font-bold leading-[47px] tracking-[0.060px]">
            Showing resources{" "}
            <span className="text-[#2a6fff] underline decoration-[3px] underline-offset-4">
              within 1 mile(s) of 42 Pennington Ave, Trenton, NJ 08618
            </span>
          </p>
          <MapPanel />
          <Results />
        </div>
      </main>
    </div>
  );
}
